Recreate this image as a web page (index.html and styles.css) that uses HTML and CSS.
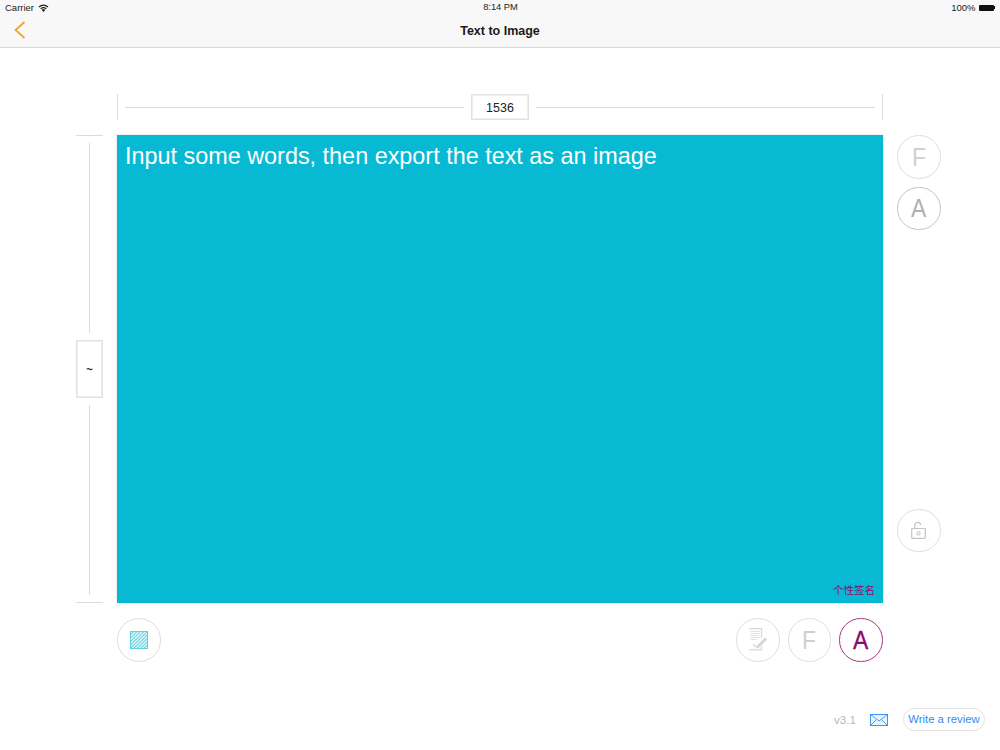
FILE: index.html
```html
<!DOCTYPE html>
<html lang="en">
<head>
<meta charset="utf-8">
<title>Text to Image</title>
<link rel="stylesheet" href="styles.css">
</head>
<body>
<header class="topbar">
  <div class="status">
    <div class="status-left">
      <span>Carrier</span>
      <svg class="wifi" width="11" height="8" viewBox="0 0 11 8"><path d="M5.5 8 3.7 5.900a2.700 2.700 0 0 1 3.600 0z" fill="#222"/><path d="M2.700 4.800a4.200 4.200 0 0 1 5.600 0" fill="none" stroke="#222" stroke-width="1.200"/><path d="M1 2.900a6.600 6.600 0 0 1 9 0" fill="none" stroke="#222" stroke-width="1.300"/></svg>
    </div>
    <div class="status-time">8:14 PM</div>
    <div class="status-right">
      <span>100%</span>
      <span class="battery"></span><span class="battery-tip"></span>
    </div>
  </div>
  <div class="nav">
    <svg class="back" width="12" height="18" viewBox="0 0 12 18"><path d="M10.500 1 1.500 9l9 8" fill="none" stroke="#f0a030" stroke-width="1.700"/></svg>
    <div class="nav-title">Text to Image</div>
  </div>
</header>

<main class="workspace">
  <div class="ruler-top">
    <span class="tick-v"></span>
    <span class="line-h"></span>
    <span class="size-box size-w">1536</span>
    <span class="line-h"></span>
    <span class="tick-v"></span>
  </div>

  <div class="ruler-left">
    <span class="tick-h"></span>
    <span class="line-v"></span>
    <span class="size-box size-h">~</span>
    <span class="line-v"></span>
    <span class="tick-h"></span>
  </div>

  <div class="canvas">
    <p class="canvas-text">Input some words, then export the text as an image</p>
    <p class="signature">个性签名</p>
  </div>

  <div class="side-tools">
    <div class="round"><span class="letter letter-f">F</span></div>
    <div class="round round-dark"><span class="letter letter-a">A</span></div>
    <div class="round lock">
      <svg width="15" height="17" viewBox="0 0 15 17"><rect x="0.700" y="6.500" width="13.600" height="9.800" rx="0.800" fill="none" stroke="#c4c4c4" stroke-width="1.200"/><path d="M3.700 6.500V3.800a3 3 0 0 1 6-0.800" fill="none" stroke="#c4c4c4" stroke-width="1.200"/><circle cx="7.500" cy="11.400" r="1.600" fill="none" stroke="#c4c4c4" stroke-width="1.100"/></svg>
    </div>
  </div>

  <div class="bottom-tools">
    <div class="round">
      <svg width="18" height="18" viewBox="0 0 18 18">
        <defs><pattern id="hatch" width="2.400" height="2.400" patternUnits="userSpaceOnUse" patternTransform="rotate(45)"><rect width="1.200" height="2.400" fill="#5fd0e0"/></pattern></defs>
        <rect x="0.500" y="0.500" width="17" height="17" fill="url(#hatch)" stroke="#5fd0e0"/>
      </svg>
    </div>
    <div class="bottom-right">
      <div class="round">
        <svg class="doc" width="20" height="23" viewBox="0 0 20 23">
          <path d="M1 .7h12.500v9M13.500 18v3.800H1" fill="none" stroke="#d8d8d8" stroke-width="1.200"/>
          <path d="M2.500 3.500h9M2.500 5.500h9M2.500 7.500h9M2.500 9.500h9M2.500 11.500h6" stroke="#e0e0e0" stroke-width="1.200"/>
          <path d="M9 17.500 17 9.500l2 2-8 8-3 1z" fill="#d4d4d4"/>
          <path d="M5 16l3 3" stroke="#d4d4d4" stroke-width="1.200"/>
        </svg>
      </div>
      <div class="round"><span class="letter letter-f">F</span></div>
      <div class="round round-active"><span class="letter letter-active">A</span></div>
    </div>
  </div>
</main>

<footer class="footer">
  <span class="version">v3.1</span>
  <svg class="mail" width="18" height="12" viewBox="0 0 18 12"><rect x="0.500" y="0.500" width="17" height="11" fill="#eaf4fe" stroke="#3d94f0"/><path d="M.5.5 9 7l8.500-6.500M.5 11.500 6.500 5.500M17.500 11.500l-6-6" fill="none" stroke="#3d94f0" stroke-width=".9"/></svg>
  <span class="review">Write a review</span>
</footer>
</body>
</html>
```

FILE: styles.css
```css
* { box-sizing: border-box; }
html, body { margin: 0; padding: 0; }
body {
  width: 1000px;
  height: 750px;
  overflow: hidden;
  background: #fff;
  font-family: "Liberation Sans", Arial, sans-serif;
  color: #000;
}
.topbar {
  height: 48px;
  background: #f8f8f8;
  border-bottom: 1px solid #d9d9d9;
}
.status {
  height: 14px;
  padding: 1px 5px 0;
  display: flex;
  align-items: center;
  justify-content: space-between;
  font-size: 9.500px;
  color: #222;
  position: relative;
}
.status-left, .status-right { display: flex; align-items: center; }
.wifi { margin-left: 4px; }
.status-time {
  position: absolute;
  left: 1px;
  right: 0;
  top: 2px;
  text-align: center;
  font-size: 9.300px;
}
.battery {
  width: 15px;
  height: 6px;
  margin-left: 3px;
  background: #111;
  border-radius: 1px;
}
.battery-tip {
  width: 1.500px;
  height: 3px;
  background: #111;
}
.nav {
  height: 33px;
  position: relative;
  display: flex;
  align-items: center;
  justify-content: center;
}
.back { position: absolute; left: 14px; top: 7px; }
.nav-title { font-size: 12.500px; font-weight: 700; color: #1a1a1a; margin-top: 1px; }

.workspace {
  margin: 46px 0 0 76px;
  display: grid;
  grid-template-columns: 27px 766px 58px;
  grid-template-rows: 26px 468px 60px;
  column-gap: 14px;
  row-gap: 15px;
  width: 880px;
  grid-template-areas:
    ". top ."
    "left canvas side"
    ". bottom .";
}
.ruler-top {
  grid-area: top;
  display: flex;
  align-items: center;
}
.tick-v { width: 1px; height: 26px; background: #dcdcdc; flex: none; }
.line-h { flex: 1; height: 1px; background: #dcdcdc; margin: 0 7px; }
.size-box {
  border: 1px solid #e2e2e2;
  outline: 1px solid #eeeeee;
  outline-offset: -2px;
  display: flex;
  align-items: center;
  justify-content: center;
  font-size: 12.500px;
  color: #222;
  flex: none;
}
.size-w { width: 58px; height: 26px; padding-top: 1px; }
.size-h { width: 27px; height: 58px; font-size: 11px; font-weight: 700; }
.ruler-left {
  grid-area: left;
  display: flex;
  flex-direction: column;
  align-items: center;
}
.tick-h { height: 1px; width: 27px; background: #dcdcdc; flex: none; }
.line-v { flex: 1; width: 1px; background: #dcdcdc; margin: 7px 0; }
.canvas {
  grid-area: canvas;
  background: #07b9d2;
  padding: 8px;
  display: flex;
  flex-direction: column;
  justify-content: space-between;
  box-shadow: 0 0 2px rgba(0, 0, 0, .15);
}
.canvas-text {
  margin: 0;
  color: #fff;
  font-size: 23.400px;
  line-height: 26px;
}
.signature {
  margin: 0 0 -1px;
  color: #8a0a74;
  font-size: 10.500px;
  line-height: 12px;
  text-align: right;
  font-family: "Liberation Sans", "Noto Sans CJK SC", sans-serif;
}
.side-tools {
  grid-area: side;
  display: flex;
  flex-direction: column;
  gap: 8px;
}
.lock { margin-top: auto; margin-bottom: 51px; }
.round {
  width: 43.500px;
  height: 43.500px;
  border-radius: 50%;
  border: 1px solid #dedede;
  display: flex;
  align-items: center;
  justify-content: center;
  flex: none;
  background: #fff;
}
.round-dark { border-color: #c4c4c4; }
.round-active { border-color: #a8357f; }
.letter { display: inline-block; font-size: 26px; line-height: 1; transform: scaleX(0.88); }
.letter-f { color: #d0d0d0; }
.letter-a { color: #b0b0b0; }
.letter-active { color: #8b0a6c; -webkit-text-stroke: 0.3px #8b0a6c; }
.bottom-tools {
  grid-area: bottom;
  display: flex;
  justify-content: space-between;
  align-items: flex-start;
}
.bottom-right { display: flex; gap: 8px; margin-right: 0.500px; }
.doc { margin-left: 1px; }

.footer {
  position: absolute;
  left: 0;
  right: 15px;
  top: 708px;
  display: flex;
  align-items: center;
  justify-content: flex-end;
}
.version { font-size: 11.700px; color: #b8b8b8; margin-right: 14px; padding-bottom: 1px; }
.review {
  margin-left: 15px;
  width: 82px;
  height: 23px;
  padding-bottom: 1px;
  border: 1px solid #e3e3e3;
  border-radius: 12px;
  display: flex;
  align-items: center;
  justify-content: center;
  font-size: 11.300px;
  color: #2f8df0;
}
```
